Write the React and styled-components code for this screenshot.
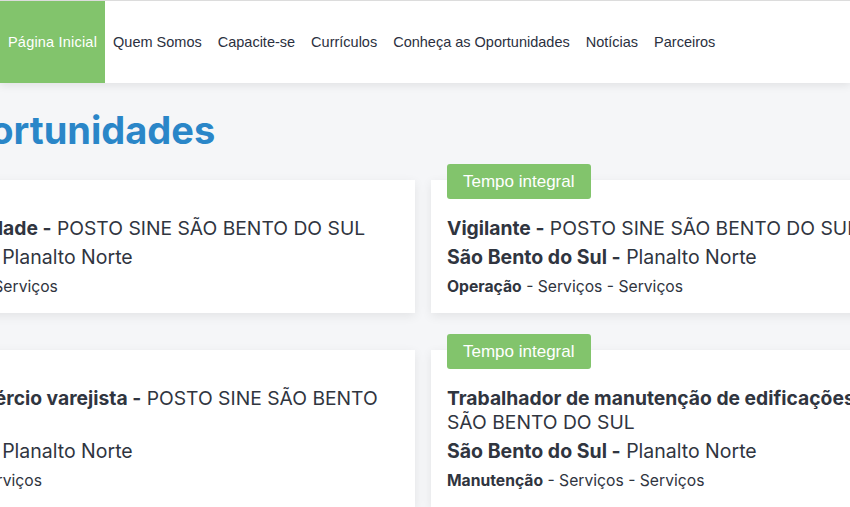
import React from "react";
import styled, { createGlobalStyle } from "styled-components";

const Global = createGlobalStyle`
  html, body { margin: 0; padding: 0; }
  body {
    background: #f5f6f8;
    overflow: hidden;
    font-family: "Liberation Sans", Arial, sans-serif;
  }
`;

const Page = styled.div`
  width: 850px;
  height: 507px;
  overflow: hidden;
  background: #f5f6f8;
`;

const Nav = styled.nav`
  display: flex;
  align-items: stretch;
  height: 82px;
  background: #ffffff;
  border-top: 1px solid #dcdcdc;
  box-shadow: 0 3px 8px rgba(0, 0, 0, 0.08);
  position: relative;
  z-index: 1;
`;

const NavItem = styled.a`
  display: flex;
  align-items: center;
  padding: 0 8px;
  font-family: "Liberation Sans", Arial, sans-serif;
  font-size: 14.5px;
  letter-spacing: ${(p) => (p.$active ? "0.2px" : "0")};
  color: ${(p) => (p.$active ? "#ffffff" : "#2b3040")};
  background: ${(p) => (p.$active ? "#82c46c" : "transparent")};
  text-decoration: none;
  white-space: nowrap;
`;

const Main = styled.main`
  padding-top: 22px;
`;

const Heading = styled.h1`
  margin: 0 0 0 -63px;
  font-family: "Inter", sans-serif;
  font-weight: 700;
  font-size: 38px;
  line-height: 50px;
  color: #2a86c8;
  white-space: nowrap;
`;

const Grid = styled.div`
  display: grid;
  grid-template-columns: 608px 608px;
  column-gap: 16px;
  row-gap: 37px;
  margin-left: -193px;
  margin-top: 25px;
`;

const Card = styled.article`
  position: relative;
  background: #ffffff;
  padding: 36px 16px 16px;
  box-shadow: 0 3px 10px rgba(0, 0, 0, 0.08);
  font-family: "Inter", sans-serif;
  color: #30353f;
`;

const Badge = styled.span`
  position: absolute;
  top: -16px;
  left: 16px;
  height: 35px;
  display: flex;
  align-items: center;
  padding: 0 16px;
  border-radius: 3px;
  background: #82c46c;
  color: #ffffff;
  font-family: "Liberation Sans", Arial, sans-serif;
  font-size: 17px;
`;

const Title = styled.div`
  font-size: 19.3px;
  line-height: 24px;
  b { font-weight: 700; }
`;

const Place = styled.div`
  margin-top: 5px;
  font-size: 19.5px;
  line-height: 24px;
  b { font-weight: 700; }
`;

const Category = styled.div`
  margin-top: 8px;
  font-size: 15.7px;
  line-height: 20px;
  b { font-weight: 700; }
`;

const jobs = [
  { badge: false, title: "Inspetora de qualidade", area: "Produção" },
  { badge: true, title: "Vigilante", area: "Operação" },
  { badge: false, title: "Atendente de comércio varejista", area: "Vendas" },
  { badge: true, title: "Trabalhador de manutenção de edificações", area: "Manutenção" },
];

const nav = [
  "Página Inicial",
  "Quem Somos",
  "Capacite-se",
  "Currículos",
  "Conheça as Oportunidades",
  "Notícias",
  "Parceiros",
];

export default function App() {
  return (
    <Page>
      <Global />
      <Nav>
        {nav.map((n, i) => (
          <NavItem key={n} href="#" $active={i === 0}>
            {n}
          </NavItem>
        ))}
      </Nav>
      <Main>
        <Heading>Oportunidades</Heading>
        <Grid>
          {jobs.map((j) => (
            <Card key={j.title}>
              {j.badge && <Badge>Tempo integral</Badge>}
              <Title>
                <b>{j.title} -</b> POSTO SINE SÃO BENTO DO SUL
              </Title>
              <Place>
                <b>São Bento do Sul -</b> Planalto Norte
              </Place>
              <Category>
                <b>{j.area}</b> - Serviços - Serviços
              </Category>
            </Card>
          ))}
        </Grid>
      </Main>
    </Page>
  );
}
